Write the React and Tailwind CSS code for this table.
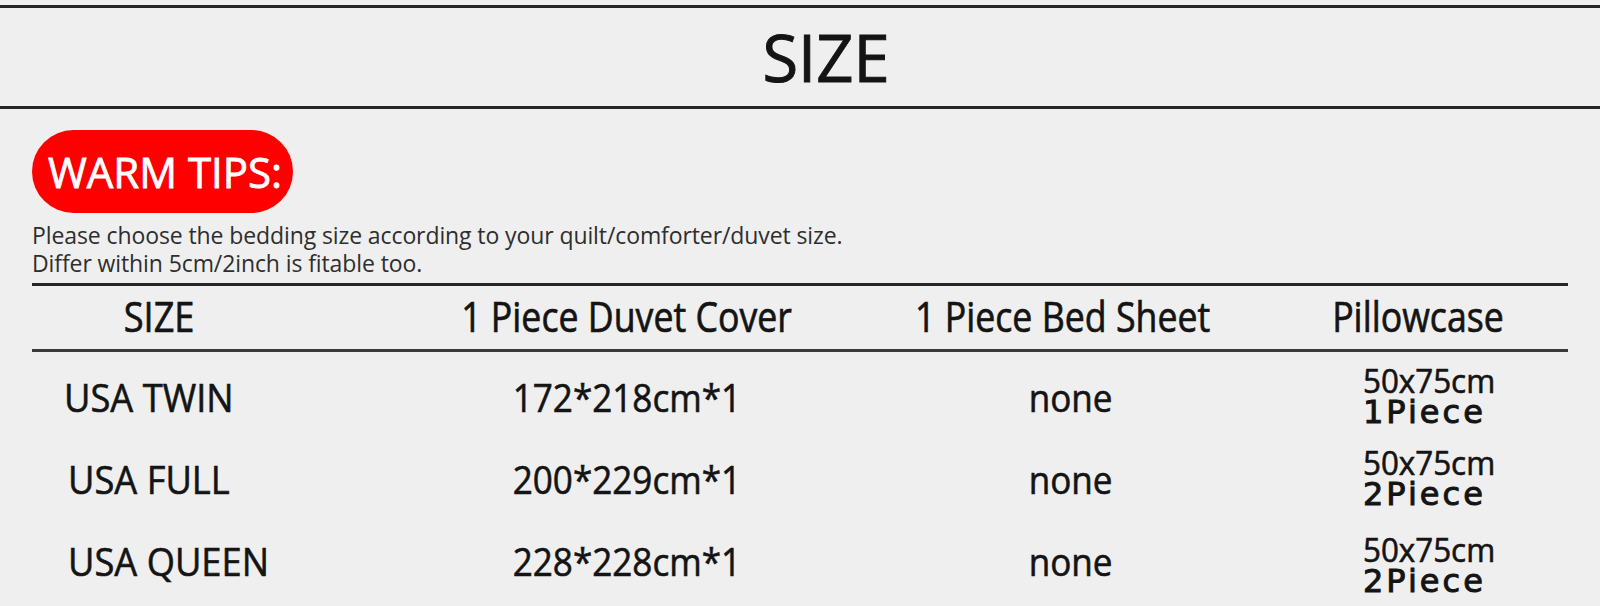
import React from 'react';

const rows = [
    { size: 'USA TWIN', pad: 'pl-[32px]', duvet: '172*218cm*1', sheet: 'none', pillow: '50x75cm', pieces: '1Piece', shift: '' },
    { size: 'USA FULL', pad: 'pl-[36px]', duvet: '200*229cm*1', sheet: 'none', pillow: '50x75cm', pieces: '2Piece', shift: '' },
    { size: 'USA QUEEN', pad: 'pl-[36px]', duvet: '228*228cm*1', sheet: 'none', pillow: '50x75cm', pieces: '2Piece', shift: 'pt-[10px]' },
];

const Rule = ({ className = '' }) => <div className={`h-[3px] bg-[#262626] ${className}`} />;

const App = () => {
    return (
        <div className="w-full h-[606px] overflow-hidden bg-[#efefef] text-[#141414] font-['Open_Sans',sans-serif] pt-[5px]">
            <Rule />
            <div className="h-[98px] flex items-center justify-center pl-[52px]">
                <h1 className="text-[65px] leading-none [-webkit-text-stroke:1px_#141414]">SIZE</h1>
            </div>
            <Rule />

            <div className="px-[32px]">
                <div className="mt-[21px] w-[261px] h-[83px] rounded-full bg-[#fe0000] flex items-center pl-[16px]">
                    <span className="text-white text-[42px] leading-none whitespace-nowrap [-webkit-text-stroke:0.8px_#ffffff]">WARM TIPS:</span>
                </div>

                <div className="mt-[8px] text-[23px] leading-[28px] text-[#2e2e2e] tracking-[-0.1px]">
                    <p>Please choose the bedding size according to your quilt/comforter/duvet size.</p>
                    <p>Differ within 5cm/2inch is fitable too.</p>
                </div>

                <Rule className="mt-[6px]" />

                {/* header row */}
                <div className="grid grid-cols-[254px_682px_190px_1fr] h-[63px] items-center pb-[4px] text-[42px] leading-none whitespace-nowrap [-webkit-text-stroke:0.7px_#141414]">
                    <div className="flex justify-center"><span className="inline-block scale-x-[0.86]">SIZE</span></div>
                    <div className="flex justify-center"><span className="inline-block scale-x-[0.85]">1 Piece Duvet Cover</span></div>
                    <div className="flex justify-center"><span className="inline-block scale-x-[0.85]">1 Piece Bed Sheet</span></div>
                    <div className="flex justify-center pl-[110px]"><span className="inline-block scale-x-[0.85]">Pillowcase</span></div>
                </div>
                <div className="h-[3px] bg-[#3a3a3a]" />

                <div className="pt-[3px] [-webkit-text-stroke:0.6px_#141414]">
                    {rows.map((r) => (
                        <div key={r.size} className="grid grid-cols-[254px_682px_190px_1fr] h-[82px] items-center whitespace-nowrap">
                            <div className={`flex ${r.pad}`}>
                                <span className="inline-block origin-left scale-x-[0.93] text-[39px] leading-none">{r.size}</span>
                            </div>
                            <div className="flex justify-center">
                                <span className="inline-block scale-x-[0.9] text-[39px] leading-none">{r.duvet}</span>
                            </div>
                            <div className="flex justify-center pl-[16px]">
                                <span className="inline-block scale-x-[0.9] text-[39px] leading-none">{r.sheet}</span>
                            </div>
                            <div className={`flex flex-col items-start pl-[205px] ${r.shift}`}>
                                <span className="inline-block origin-left scale-x-[0.95] text-[33px] leading-[32px]">{r.pillow}</span>
                                <span className="font-['DejaVu_Sans',sans-serif] text-[32px] leading-[30px] tracking-[3px] [-webkit-text-stroke:1px_#141414]">{r.pieces}</span>
                            </div>
                        </div>
                    ))}
                </div>
            </div>
        </div>
    );
};

export default App;
